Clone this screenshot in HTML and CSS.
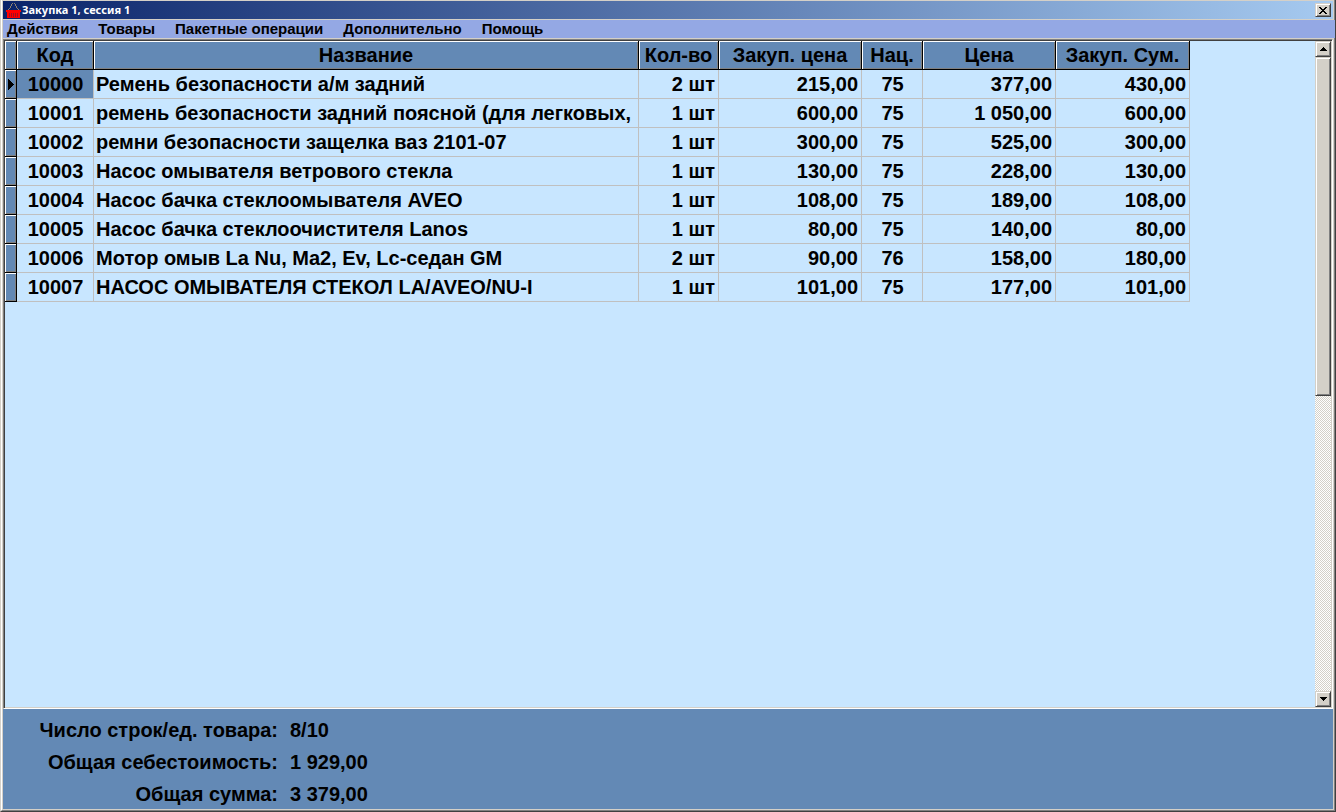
FILE: index.html
```
<!DOCTYPE html>
<html lang="ru">
<head>
    <meta charset="UTF-8">
    <meta name="viewport" content="width=device-width, initial-scale=1.0">
    <title>Закупка 1, сессия 1</title>
    <link rel="stylesheet" href="styles.css">
</head>
<body>

    <div class="window">
        <header class="titlebar">
            <svg class="logo" width="16" height="16" viewBox="0 0 16 16" shape-rendering="crispEdges">
                <path d="M6 1h1v1H6zM8 1h1v1H8zM5 2h1v2H5zM9 2h1v2H9zM4 4h1v2H4zM10 4h1v2h-1zM3 6h1v1H3zM11 6h1v1h-1zM2 7h1v1H2zM12 7h1v1h-1z" fill="#8c8070"/>
                <path d="M0 8h15v2h-1v6H1v-6H0z" fill="#f00"/>
                <path d="M3 11h1v4H3zM5 11h1v4H5zM7 11h1v4H7zM9 11h1v4H9zM11 11h1v4h-1z" fill="#a01020"/>
            </svg>
            <h1>Закупка 1, сессия 1</h1>
            <button type="button" class="close" aria-label="Закрыть">
                <svg width="8" height="7" viewBox="0 0 8 7" shape-rendering="crispEdges">
                    <path d="M0 0h2v1h1v1h2V1h1V0h2v1H7v1H6v1H5v1h1v1h1v1h1v1H6V6H5V5H3v1H2v1H0V6h1V5h1V4h1V3H2V2H1V1H0z"/>
                </svg>
            </button>
        </header>

        <nav class="menu">
            <button type="button">Действия</button>
            <button type="button">Товары</button>
            <button type="button">Пакетные операции</button>
            <button type="button">Дополнительно</button>
            <button type="button">Помощь</button>
        </nav>

        <main class="grid">
            <div class="grid-body">
                <table>
                    <colgroup>
                        <col class="c-mark"><col class="c-code"><col class="c-name"><col class="c-qty">
                        <col class="c-buy"><col class="c-markup"><col class="c-price"><col class="c-sum">
                    </colgroup>
                    <thead>
                        <tr>
                            <th></th>
                            <th>Код</th>
                            <th>Название</th>
                            <th>Кол-во</th>
                            <th>Закуп. цена</th>
                            <th>Нац.</th>
                            <th>Цена</th>
                            <th>Закуп. Сум.</th>
                        </tr>
                    </thead>
                    <tbody>
                        <tr class="current"><th><svg width="6" height="11" viewBox="0 0 6 11" shape-rendering="crispEdges"><path d="M0 0h1v1h1v1h1v1h1v1h1v1h1v1H5v1H4v1H3v1H2v1H1v1H0z"/></svg></th><td class="mid">10000</td><td>Ремень безопасности а/м задний</td><td class="num">2 шт</td><td class="num">215,00</td><td class="mid">75</td><td class="num">377,00</td><td class="num">430,00</td></tr>
                        <tr><th></th><td class="mid">10001</td><td>ремень безопасности задний поясной (для легковых,</td><td class="num">1 шт</td><td class="num">600,00</td><td class="mid">75</td><td class="num">1 050,00</td><td class="num">600,00</td></tr>
                        <tr><th></th><td class="mid">10002</td><td>ремни безопасности защелка ваз 2101-07</td><td class="num">1 шт</td><td class="num">300,00</td><td class="mid">75</td><td class="num">525,00</td><td class="num">300,00</td></tr>
                        <tr><th></th><td class="mid">10003</td><td>Насос омывателя ветрового стекла</td><td class="num">1 шт</td><td class="num">130,00</td><td class="mid">75</td><td class="num">228,00</td><td class="num">130,00</td></tr>
                        <tr><th></th><td class="mid">10004</td><td>Насос бачка стеклоомывателя AVEO</td><td class="num">1 шт</td><td class="num">108,00</td><td class="mid">75</td><td class="num">189,00</td><td class="num">108,00</td></tr>
                        <tr><th></th><td class="mid">10005</td><td>Насос бачка стеклоочистителя Lanos</td><td class="num">1 шт</td><td class="num">80,00</td><td class="mid">75</td><td class="num">140,00</td><td class="num">80,00</td></tr>
                        <tr><th></th><td class="mid">10006</td><td>Мотор омыв La Nu, Ma2, Ev, Lc-седан GM</td><td class="num">2 шт</td><td class="num">90,00</td><td class="mid">76</td><td class="num">158,00</td><td class="num">180,00</td></tr>
                        <tr><th></th><td class="mid">10007</td><td>НАСОС ОМЫВАТЕЛЯ СТЕКОЛ LA/AVEO/NU-I</td><td class="num">1 шт</td><td class="num">101,00</td><td class="mid">75</td><td class="num">177,00</td><td class="num">101,00</td></tr>
                    </tbody>
                </table>
            </div>
            <div class="scrollbar">
                <button type="button" aria-label="Вверх">
                    <svg width="7" height="4" viewBox="0 0 7 4" shape-rendering="crispEdges"><path d="M3 0h1v1h1v1h1v1h1v1H0V3h1V2h1V1h1z"/></svg>
                </button>
                <div class="thumb"></div>
                <div class="track"></div>
                <button type="button" aria-label="Вниз">
                    <svg width="7" height="4" viewBox="0 0 7 4" shape-rendering="crispEdges"><path d="M0 0h7v1H6v1H5v1H4v1H3V3H2V2H1V1H0z"/></svg>
                </button>
            </div>
        </main>

        <footer>
            <dl class="totals">
                <dt>Число строк/ед. товара:</dt><dd>8/10</dd>
                <dt>Общая себестоимость:</dt><dd>1 929,00</dd>
                <dt>Общая сумма:</dt><dd>3 379,00</dd>
            </dl>
        </footer>
    </div>

</body>
</html>
```
FILE: styles.css
```
* {
    box-sizing: border-box;
}
body {
    margin: 0;
    height: 100vh;
    border: 1px solid;
    border-color: #d4d0c8 #404040 #404040 #d4d0c8;
    border-top: none;
    font: bold 20px/28px "Liberation Sans", Arial, sans-serif;
    color: #000;
}
button {
    font: inherit;
    color: inherit;
    margin: 0;
    padding: 0;
    border: none;
}
svg {
    display: block;
}
.window {
    display: flex;
    flex-direction: column;
    height: 100%;
    padding: 1px;
    border: 1px solid;
    border-color: #fff #808080 #808080 #fff;
    border-top: none;
    background: #d4d0c8;
}

/* title */
.titlebar {
    display: flex;
    align-items: center;
    height: 18px;
    padding: 0 2px 0 3px;
    background: linear-gradient(to right, #0a246a, #a6caf0);
}
.titlebar h1 {
    flex: 1;
    margin: 0;
    font: bold 11px/18px "Noto Sans", Tahoma, sans-serif;
    color: #fff;
}
.close,
.scrollbar button,
.thumb {
    background: #d4d0c8;
    border: 1px solid;
    border-color: #d4d0c8 #404040 #404040 #d4d0c8;
    box-shadow: inset 1px 1px #fff, inset -1px -1px #808080;
}
.close {
    display: grid;
    place-items: center;
    width: 16px;
    height: 14px;
}

/* menu */
.menu {
    display: flex;
    gap: 20px;
    height: 18px;
    margin: 1px -3px 1px 0;
    padding-left: 4px;
    background: #94a8e4;
    position: relative;
}
.menu button {
    background: none;
    font-size: 15px;
    line-height: 18px;
    white-space: nowrap;
}

/* goods */
.grid {
    flex: 1;
    display: flex;
    min-height: 0;
    padding: 1px;
    border: 1px solid;
    border-color: #808080 #fff #fff #808080;
    box-shadow: inset 1px 1px #404040, inset -1px -1px #d4d0c8;
    background: #c8e6ff;
}
.grid-body {
    flex: 1;
    min-width: 0;
    overflow: hidden;
}
table {
    width: 1185px;
    table-layout: fixed;
    border-collapse: separate;
    border-spacing: 0;
}
.c-mark { width: 12px; }
.c-code { width: 77px; }
.c-name { width: 545px; }
.c-qty { width: 80px; }
.c-buy { width: 143px; }
.c-markup { width: 61px; }
.c-price { width: 133px; }
.c-sum { width: 134px; }
th,
td {
    height: 29px;
    padding: 0 3px 0 2px;
    border-right: 1px solid #c0c0c0;
    border-bottom: 1px solid #c0c0c0;
    text-align: left;
    white-space: nowrap;
    overflow: hidden;
}
th {
    padding: 0;
    border-color: #000;
    background: #6389b5;
    box-shadow: inset 1px 1px #fff, inset -1px -1px #808080;
    text-align: center;
}
tbody th {
    padding-left: 3px;
}
.mid {
    padding: 0 2px 0 3px;
    text-align: center;
}
.num {
    text-align: right;
}
.current .mid:nth-child(2) {
    background: #6389b5;
}

/* scroll */
.scrollbar {
    display: flex;
    flex-direction: column;
    width: 16px;
}
.scrollbar button {
    display: grid;
    place-items: center;
    height: 16px;
}
.thumb {
    flex: 8;
}
.track {
    flex: 7;
    background: repeating-conic-gradient(#d4d0c8 0 25%, #fff 0 50%) 0 0 / 2px 2px;
}

/* totals */
footer {
    padding-top: 6px;
    background: #6389b5;
}
.totals {
    display: grid;
    grid-template-columns: 275px 1fr;
    gap: 2px 12px;
    margin: 0;
    line-height: 30px;
}
.totals dt {
    text-align: right;
}
.totals dd {
    margin: 0;
}
```
